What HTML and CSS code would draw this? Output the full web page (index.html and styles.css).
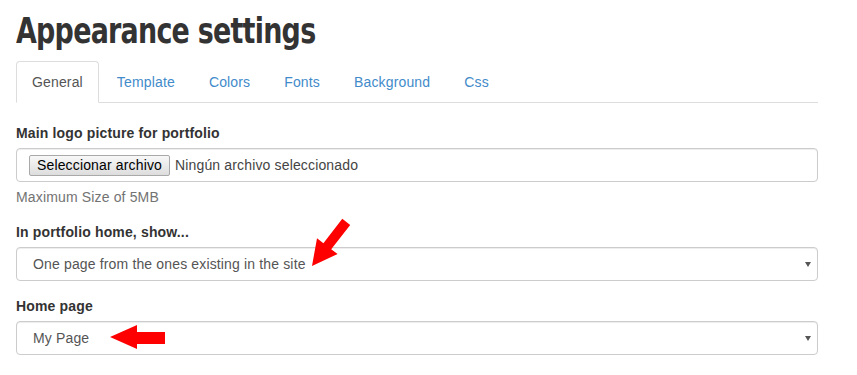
FILE: index.html
```html
<!DOCTYPE html>
<html>
<head>
    <title>Appearance settings</title>
    <link rel="stylesheet" href="styles.css">
</head>
<body>
    <div class="container">
        <h1><span class="title">Appearance settings</span></h1>
        <ul class="nav-tabs">
            <li class="active"><a href="#">General</a></li>
            <li><a href="#">Template</a></li>
            <li><a href="#">Colors</a></li>
            <li><a href="#">Fonts</a></li>
            <li><a href="#">Background</a></li>
            <li><a href="#">Css</a></li>
        </ul>
        <div class="tab-content">
            <div class="form-group">
                <label>Main logo picture for portfolio</label>
                <div class="form-control file-control">
                    <span class="file-button">Seleccionar archivo</span>
                    <span class="file-name">Ningún archivo seleccionado</span>
                </div>
                <p class="help-block">Maximum Size of 5MB</p>
            </div>
            <div class="form-group">
                <label>In portfolio home, show...</label>
                <div class="form-control select-control">
                    <span class="select-text">One page from the ones existing in the site</span>
                    <span class="caret"></span>
                </div>
            </div>
            <div class="form-group">
                <label>Home page</label>
                <div class="form-control select-control">
                    <span class="select-text">My Page</span>
                    <span class="caret"></span>
                </div>
            </div>
        </div>
    </div>

    <!-- flechas rojas encima del formulario -->
    <svg class="arrows" width="857" height="375" viewBox="0 0 857 375">
        <polygon fill="#ff0000" points="312,266 317,238.3 323.4,243.2 342.3,218.8 350.2,224.9 331.2,249.3 337.6,254.1"/>
        <polygon fill="#ff0000" points="110,337 137,325 137,332 165,332 165,344 137,344 137,349"/>
    </svg>
</body>
</html>
```

FILE: styles.css
```css
body {
    font-family: "Liberation Sans", Arial, sans-serif;
    font-size: 14px;
    line-height: 20px;
    letter-spacing: 0.15px;
    color: #333;
    background-color: #fff;
    margin: 0;
    padding: 0;
}
.container {
    width: 802px;
    margin-left: 16px;
}
h1 {
    font-family: "DejaVu Sans", sans-serif;
    font-size: 35px;
    font-weight: bold;
    line-height: 40px;
    letter-spacing: -1px;
    color: #333;
    margin: 11px 0 10px;
}
.title {
    display: inline-block;
    transform: scaleX(0.77);
    transform-origin: left center;
}
.nav-tabs {
    list-style: none;
    margin: 0;
    padding: 0;
    display: flex;
    border-bottom: 1px solid #ddd;
}
.nav-tabs li {
    margin-right: 2px;
    margin-bottom: -1px;
}
.nav-tabs a {
    display: block;
    padding: 10px 15px;
    line-height: 20px;
    border: 1px solid transparent;
    border-radius: 4px 4px 0 0;
    color: #428bca;
    text-decoration: none;
}
.nav-tabs li.active a {
    color: #555;
    background-color: #fff;
    border-color: #ddd #ddd transparent;
}
.tab-content {
    padding-top: 20px;
}
.form-group {
    margin-bottom: 15px;
}
.form-group label {
    display: block;
    font-weight: bold;
    margin-bottom: 5px;
}
.form-control {
    display: flex;
    align-items: center;
    height: 34px;
    box-sizing: border-box;
    padding: 6px 12px;
    border: 1px solid #ccc;
    border-radius: 4px;
    box-shadow: inset 0 1px 1px rgba(0, 0, 0, 0.075);
    color: #555;
}
.file-button {
    height: 21px;
    box-sizing: border-box;
    padding: 0 7px;
    line-height: 19px;
    color: #000;
    border: 1px solid #a9a9a9;
    border-radius: 2px;
    background: linear-gradient(#f8f8f8, #dddddd);
}
.file-name {
    margin-left: 5px;
    color: #444;
}
.help-block {
    margin: 5px 0 10px;
    color: #737373;
}
.select-control {
    padding: 6px 6px 6px 16px;
}
.select-text {
    flex: 1;
}
.caret {
    width: 0;
    height: 0;
    border-left: 3px solid transparent;
    border-right: 3px solid transparent;
    border-top: 5px solid #555;
}
.arrows {
    position: absolute;
    top: 0;
    left: 0;
    pointer-events: none;
}
```
